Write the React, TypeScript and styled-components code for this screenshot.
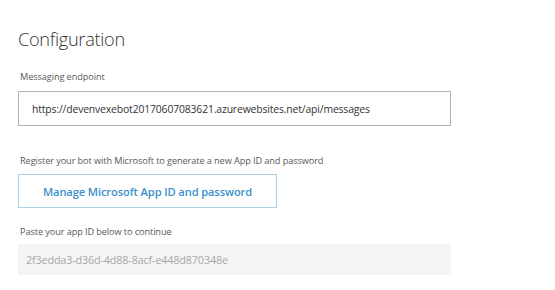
import React from "react";
import styled, { createGlobalStyle } from "styled-components";

const Global = createGlobalStyle`
  html, body { margin: 0; padding: 0; background: #ffffff; }
  body { font-family: "Open Sans", "Noto Sans", sans-serif; }
`;

const Page = styled.div`
  width: 555px;
  height: 290px;
  box-sizing: border-box;
  padding: 26px 0 0 18px;
  display: flex;
  flex-direction: column;
`;

const Title = styled.h1`
  margin: 0;
  font-size: 18.2px;
  line-height: 26px;
  font-weight: 300;
  color: #333333;
  letter-spacing: -0.3px;
`;

const Label = styled.div<{ $top: number }>`
  margin-top: ${(p) => p.$top}px;
  padding-left: 2px;
  font-size: 9.2px;
  line-height: 14px;
  color: #595959;
  letter-spacing: -0.1px;
`;

const Field = styled.div<{ $disabled?: boolean }>`
  box-sizing: border-box;
  width: 433px;
  height: ${(p) => (p.$disabled ? 31 : 35)}px;
  margin-top: ${(p) => (p.$disabled ? 5 : 7)}px;
  display: flex;
  align-items: center;
  padding-left: ${(p) => (p.$disabled ? 7 : 13)}px;
  border: 1px solid ${(p) => (p.$disabled ? "#f4f4f4" : "#b4b4b4")};
  background: ${(p) => (p.$disabled ? "#f4f4f4" : "#ffffff")};
  color: ${(p) => (p.$disabled ? "#a8a8a8" : "#333333")};
  font-size: ${(p) => (p.$disabled ? 10.8 : 10.4)}px;
  letter-spacing: -0.15px;
  white-space: nowrap;
`;

const Button = styled.button`
  box-sizing: border-box;
  width: 259px;
  height: 34px;
  margin-top: 6px;
  border: 1px solid #a9d0ec;
  background: #ffffff;
  color: #3a8fcc;
  font-family: "Open Sans", "Noto Sans", sans-serif;
  font-size: 11.1px;
  font-weight: 600;
  letter-spacing: -0.1px;
  padding: 0;
  cursor: pointer;
`;

export default function App() {
  return (
    <>
      <Global />
      <Page>
        <Title>Configuration</Title>
        <Label $top={18}>Messaging endpoint</Label>
        <Field>https://devenvexebot20170607083621.azurewebsites.net/api/messages</Field>
        <Label $top={28}>Register your bot with Microsoft to generate a new App ID and password</Label>
        <Button>Manage Microsoft App ID and password</Button>
        <Label $top={17}>Paste your app ID below to continue</Label>
        <Field $disabled>2f3edda3-d36d-4d88-8acf-e448d870348e</Field>
      </Page>
    </>
  );
}
